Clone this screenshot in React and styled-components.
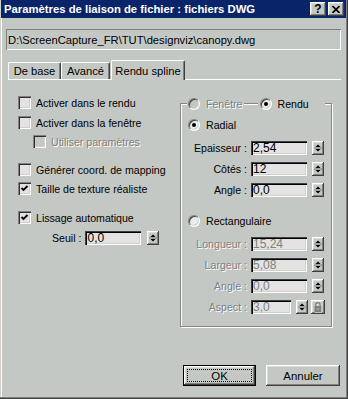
import React from 'react';
import styled, { createGlobalStyle } from 'styled-components';

const BG = '#c4c8c4';
const FIELD = '#e2e3e2';

const GlobalStyle = createGlobalStyle`
  body {
    margin: 0;
    background: ${BG};
    font-family: "Liberation Sans", Arial, sans-serif;
    font-size: 10.6px;
    color: #000;
  }
`;

const raised = `
  box-shadow: inset -1px -1px #404040, inset 1px 1px #ffffff,
    inset -2px -2px #808080, inset 2px 2px #dcdcdc;
`;

const sunken = `
  box-shadow: inset 1px 1px #808080, inset 2px 2px #303030,
    inset -1px -1px #ffffff, inset -2px -2px #d4d0c8;
`;

const Window = styled.div`
  width: 348px;
  height: 399px;
  box-sizing: border-box;
  background: ${BG};
  padding: 0 2px 2px 1px;
  display: flex;
  flex-direction: column;
  box-shadow: inset -1px -1px #404040, inset -2px -2px #808080,
    inset 1px 0 #d4d0c8, inset 2px 0 #ffffff;
`;

const TitleBar = styled.div`
  height: 18px;
  flex: none;
  display: flex;
  align-items: center;
  padding: 0 2px 0 3px;
  background: #0a246a;
  color: #fff;
  font-weight: bold;
  font-size: 11.3px;
  white-space: nowrap;
`;

const TitleButtons = styled.div`
  margin-left: auto;
  display: flex;
  gap: 2px;
`;

const TitleButton = styled.div`
  width: 16px;
  height: 14px;
  box-sizing: border-box;
  background: ${BG};
  ${raised}
  display: flex;
  align-items: center;
  justify-content: center;
  color: #000;
  font-size: 12px;
  font-weight: bold;
  line-height: 1;
`;

const Body = styled.div`
  flex: 1;
  display: flex;
  flex-direction: column;
  padding-left: 5px;
`;

const PathField = styled.div`
  margin-top: 11px;
  width: 335px;
  height: 21px;
  box-sizing: border-box;
  padding: 0 2px;
  display: flex;
  align-items: center;
  font-size: 11.2px;
  box-shadow: inset 1px 1px #808080, inset -1px -1px #ffffff;
`;

const TabStrip = styled.div`
  margin: 9px 0 0 2px;
  display: flex;
  align-items: flex-end;
  position: relative;
  z-index: 1;
  height: 20px;
`;

const Tab = styled.div`
  height: ${(p) => (p.$active ? 20 : 17)}px;
  margin: ${(p) => (p.$active ? '0 0 -1px 1px' : '0')};
  box-sizing: border-box;
  padding: 0;
  width: ${(p) => p.$w}px;
  display: flex;
  align-items: center;
  justify-content: center;
  white-space: nowrap;
  background: ${BG};
  font-size: 11.2px;
  border-top: 1px solid #fff;
  border-left: 1px solid #fff;
  border-right: 1px solid #404040;
  border-radius: 2px 2px 0 0;
  box-shadow: inset -1px 0 #808080;
`;

const TabPanel = styled.div`
  margin-left: 2px;
  width: 333px;
  box-sizing: border-box;
  border-top: 1px solid #fff;
  padding: 13px 9px 0 10px;
  display: grid;
  grid-template-columns: 162px 152px;
  align-items: start;
`;

const Column = styled.div`
  display: flex;
  flex-direction: column;
`;

const CheckRow = styled.label`
  display: flex;
  align-items: center;
  gap: 5px;
  height: 19px;
  margin-top: ${(p) => p.$mt || 0}px;
  padding-left: ${(p) => p.$indent || 0}px;
  white-space: nowrap;
`;

const Text = styled.span`
  color: ${(p) => (p.$disabled ? '#808080' : '#000')};
  text-shadow: ${(p) => (p.$disabled ? '1px 1px 0 #fff' : 'none')};
`;

const Box = styled.span`
  width: 13px;
  height: 13px;
  flex: none;
  box-sizing: border-box;
  background: ${(p) => (p.$disabled ? BG : FIELD)};
  ${sunken}
  display: flex;
  align-items: center;
  justify-content: center;
`;

const Checkbox = ({ checked, disabled }) => (
  <Box $disabled={disabled}>
    {checked && (
      <svg width="9" height="9" viewBox="0 0 9 9">
        <path d="M1.5 4 L3.5 6 L7.5 2" fill="none" stroke="#000" strokeWidth="1.9" />
      </svg>
    )}
  </Box>
);

const Round = styled.span`
  width: 12px;
  height: 12px;
  flex: none;
  box-sizing: border-box;
  border-radius: 50%;
  border: 1px solid;
  border-color: #808080 #ffffff #ffffff #808080;
  box-shadow: inset 1px 1px #404040, inset -1px -1px #d4d0c8;
  background: ${(p) => (p.$disabled ? BG : '#ececec')};
  display: flex;
  align-items: center;
  justify-content: center;
  &::after {
    content: '';
    display: ${(p) => (p.$checked ? 'block' : 'none')};
    width: 4px;
    height: 4px;
    border-radius: 50%;
    background: #000;
  }
`;

const RadioRow = styled.label`
  display: flex;
  align-items: center;
  gap: 6px;
  height: 13px;
  margin-top: ${(p) => p.$mt || 0}px;
  padding-left: ${(p) => p.$indent || 0}px;
  white-space: nowrap;
`;

const Radio = ({ label, checked, disabled, mt, indent }) => (
  <RadioRow $mt={mt} $indent={indent}>
    <Round $checked={checked} $disabled={disabled} />
    <Text $disabled={disabled}>{label}</Text>
  </RadioRow>
);

const Field = styled.div`
  width: ${(p) => p.$w || 56}px;
  height: 14px;
  flex: none;
  box-sizing: border-box;
  padding: 0 2px;
  background: ${FIELD};
  box-shadow: inset 1px 1px #404040, inset 2px 2px #000,
    inset -1px -1px #ffffff, inset -2px -2px #d4d0c8;
  display: flex;
  align-items: center;
  font-size: 12px;
  color: ${(p) => (p.$disabled ? '#808080' : '#000')};
`;

const SpinBox = styled.span`
  width: 12px;
  height: 14px;
  flex: none;
  margin-left: ${(p) => p.$ml ?? 5}px;
  box-sizing: border-box;
  background: ${BG};
  ${raised}
  display: flex;
`;

const Spinner = ({ ml }) => (
  <SpinBox $ml={ml}>
    <svg width="12" height="14" viewBox="0 0 12 14">
      <polygon points="3.5,6 8.5,6 6,3.5" fill="#000" />
      <line x1="2" y1="7" x2="10" y2="7" stroke="#808080" />
      <polygon points="3.5,8 8.5,8 6,10.5" fill="#000" />
    </svg>
  </SpinBox>
);

const LockBox = styled.span`
  width: 14px;
  height: 14px;
  flex: none;
  margin-left: 3px;
  box-sizing: border-box;
  background: ${BG};
  ${raised}
  display: flex;
`;

const Lock = () => (
  <LockBox>
    <svg width="14" height="14" viewBox="0 0 14 14">
      <path d="M4.8 6.5 V5 a2.2 2.2 0 0 1 4.4 0 V6.5" fill="none" stroke="#fff" strokeWidth="1.4" transform="translate(0.6 0.6)" />
      <path d="M4.8 6.5 V5 a2.2 2.2 0 0 1 4.4 0 V6.5" fill="none" stroke="#808080" strokeWidth="1.4" />
      <rect x="4" y="6.5" width="7" height="6" fill="#fff" />
      <rect x="3.5" y="6" width="7" height="6" fill="#808080" />
      <rect x="6.5" y="8" width="1" height="2" fill="#c4c8c4" />
    </svg>
  </LockBox>
);

const SeuilRow = styled.div`
  display: flex;
  align-items: center;
  margin-top: 4px;
  padding-left: 34px;
`;

const SeuilLabel = styled.span`
  margin-right: 4px;
  white-space: nowrap;
`;

const Group = styled.fieldset`
  margin: 4px 0 0;
  padding: 0 0 12px;
  min-width: 0;
  border: 1px solid #858585;
  box-shadow: inset 1px 1px #fff, 1px 1px #fff;
`;

const Legend = styled.legend`
  margin-left: 6px;
  padding: 0 16px 0 1px;
  display: flex;
  align-items: center;
  height: 13px;
  background: ${BG};
`;

const Dash = styled.span`
  width: 14px;
  height: 0;
  margin: 0 2px 0 1px;
  border-top: 1px solid #858585;
  border-bottom: 1px solid #fff;
`;

const ParamRow = styled.div`
  display: flex;
  align-items: center;
  margin-top: ${(p) => p.$mt ?? 7}px;
`;

const ParamLabel = styled(Text)`
  width: 66px;
  margin-right: 4px;
  text-align: right;
  white-space: nowrap;
`;

const Param = ({ label, value, disabled, mt, w, spinMl, lock }) => (
  <ParamRow $mt={mt}>
    <ParamLabel $disabled={disabled}>{label}</ParamLabel>
    <Field $disabled={disabled} $w={w}>{value}</Field>
    <Spinner ml={spinMl} />
    {lock && <Lock />}
  </ParamRow>
);

const Footer = styled.div`
  margin-top: auto;
  display: flex;
  justify-content: flex-end;
  gap: 10px;
  padding: 0 6px 11px 0;
`;

const Button = styled.button`
  width: ${(p) => p.$w}px;
  height: 21px;
  padding: 0;
  background: ${BG};
  font-family: "Liberation Sans", Arial, sans-serif;
  font-size: 11.4px;
  color: #000;
  border: ${(p) => (p.$default ? '1px solid #000' : 'none')};
  ${raised}
  display: flex;
  align-items: center;
  justify-content: center;
  position: relative;
`;

const Focus = styled.span`
  position: absolute;
  inset: 3px;
  border: 1px dotted #000;
`;

export default function App() {
  return (
    <>
      <GlobalStyle />
      <Window>
        <TitleBar>
          <span>Paramètres de liaison de fichier : fichiers DWG</span>
          <TitleButtons>
            <TitleButton>?</TitleButton>
            <TitleButton>
              <svg width="8" height="7" viewBox="0 0 8 7">
                <path d="M0.5 0 L7.5 7 M7.5 0 L0.5 7" stroke="#000" strokeWidth="1.6" />
              </svg>
            </TitleButton>
          </TitleButtons>
        </TitleBar>
        <Body>
          <PathField>D:\ScreenCapture_FR\TUT\designviz\canopy.dwg</PathField>
          <TabStrip>
            <Tab $w={53}>De base</Tab>
            <Tab $w={49}>Avancé</Tab>
            <Tab $w={74} $active>Rendu spline</Tab>
          </TabStrip>
          <TabPanel>
            <Column>
              <CheckRow>
                <Checkbox />
                <Text>Activer dans le rendu</Text>
              </CheckRow>
              <CheckRow $mt={1}>
                <Checkbox />
                <Text>Activer dans la fenêtre</Text>
              </CheckRow>
              <CheckRow $indent={15}>
                <Checkbox disabled />
                <Text $disabled>Utiliser paramètres</Text>
              </CheckRow>
              <CheckRow $mt={9}>
                <Checkbox />
                <Text>Générer coord. de mapping</Text>
              </CheckRow>
              <CheckRow>
                <Checkbox checked />
                <Text>Taille de texture réaliste</Text>
              </CheckRow>
              <CheckRow $mt={10}>
                <Checkbox checked />
                <Text>Lissage automatique</Text>
              </CheckRow>
              <SeuilRow>
                <SeuilLabel>Seuil :</SeuilLabel>
                <Field>0,0</Field>
                <Spinner ml={6} />
              </SeuilRow>
            </Column>
            <Group>
              <Legend>
                <RadioRow>
                  <Round $disabled />
                  <Text $disabled>Fenêtre</Text>
                </RadioRow>
                <Dash />
                <RadioRow>
                  <Round $checked />
                  <Text>Rendu</Text>
                </RadioRow>
              </Legend>
              <Radio label="Radial" checked mt={8} indent={7} />
              <Param label="Epaisseur :" value="2,54" mt={10} />
              <Param label="Côtés :" value="12" />
              <Param label="Angle :" value="0,0" />
              <Radio label="Rectangulaire" mt={17} indent={7} />
              <Param label="Longueur :" value="15,24" disabled mt={10} />
              <Param label="Largeur :" value="5,08" disabled />
              <Param label="Angle :" value="0,0" disabled />
              <Param label="Aspect :" value="3,0" disabled w={40} lock />
            </Group>
          </TabPanel>
          <Footer>
            <Button $w={73} $default>
              <Focus />
              OK
            </Button>
            <Button $w={74}>Annuler</Button>
          </Footer>
        </Body>
      </Window>
    </>
  );
}
